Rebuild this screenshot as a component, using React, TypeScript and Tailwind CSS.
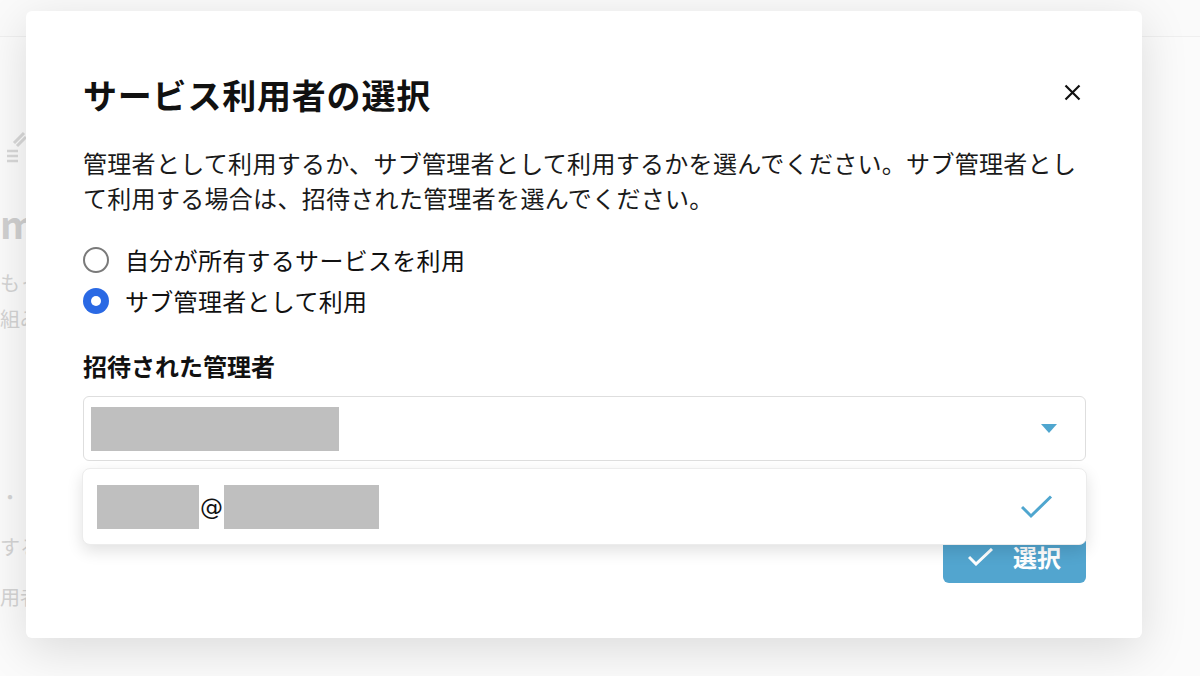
import React from 'react';

const Redacted = ({ w }: { w: number }) => (
    <span className="inline-block h-[44px] bg-[#bfbfbf]" style={{ width: w }} />
);

export default function App() {
    return (
        <div className="relative h-[676px] w-[1200px] overflow-hidden bg-[#fbfbfb] font-['Noto_Sans_CJK_JP','Noto_Sans',sans-serif] text-[#111]">
            {/* Page behind the dialog */}
            <div className="h-[37px] border-b border-[#efefef] bg-[#fafafa]" />
            <div className="flex flex-col items-start whitespace-nowrap text-[#d4d4d4]">
                <svg width="26" height="40" viewBox="0 0 26 40" className="mt-[92px] shrink-0">
                    <path d="M14 14 L24 4 M17 17 L26 8" stroke="#d8d8d8" strokeWidth="3" />
                    <path d="M7 22 h11 M7 27 h11 M7 32 h11" stroke="#d8d8d8" strokeWidth="2.5" />
                </svg>
                <div className="mt-[34px] text-[38px] font-bold leading-[40px] text-[#d0d0d0]">ma</div>
                <div className="mt-[22px] text-[20px] leading-[36px]">もっと簡単に</div>
                <div className="text-[20px] leading-[36px]">組み合わせ</div>
                <div className="mt-[150px] text-[20px] leading-[20px]">・</div>
                <div className="mt-[22px] text-[20px] leading-[36px]">するよ</div>
                <div className="mt-[14px] text-[20px] leading-[36px]">用者</div>
            </div>

            {/* Dialog */}
            <div className="absolute left-[26px] top-[11px] flex w-[1116px] flex-col rounded-[6px] bg-white pb-[55px] pl-[57px] pr-[56px] pt-[60px] shadow-[0_12px_48px_rgba(0,0,0,0.13)]">
                <div className="flex items-center justify-between">
                    <h2 className="text-[34px] font-bold leading-[48px] tracking-[0.8px]">サービス利用者の選択</h2>
                    <button className="mr-[5px] -mt-[6px]" aria-label="閉じる">
                        <svg width="17" height="17" viewBox="0 0 17 17">
                            <path d="M1.5 1.5 L15.5 15.5 M15.5 1.5 L1.5 15.5" stroke="#111" strokeWidth="2.2" />
                        </svg>
                    </button>
                </div>

                <p className="mt-[26px] text-[24px] leading-[35px] tracking-[0.3px] text-[#1a1a1a]">
                    管理者として利用するか、サブ管理者として利用するかを選んでください。サブ管理者とし
                    <br />
                    て利用する場合は、招待された管理者を選んでください。
                </p>

                <div className="mt-[24px] flex flex-col">
                    <label className="flex h-[41px] items-center gap-[16px]">
                        <span className="h-[26px] w-[26px] rounded-full border-2 border-[#7a7a7a]" />
                        <span className="text-[24px] tracking-[0.3px]">自分が所有するサービスを利用</span>
                    </label>
                    <label className="flex h-[41px] items-center gap-[16px]">
                        <span className="flex h-[26px] w-[26px] items-center justify-center rounded-full bg-[#2a69e4]">
                            <span className="h-[10px] w-[10px] rounded-full bg-white" />
                        </span>
                        <span className="text-[24px] tracking-[0.3px]">サブ管理者として利用</span>
                    </label>
                </div>

                <div className="mt-[28px] text-[24px] font-bold leading-[34px]">招待された管理者</div>

                <div className="relative mt-[13px]">
                    <div className="flex h-[65px] items-center justify-between rounded-[6px] border border-[#dedede] pl-[7px] pr-[28px]">
                        <Redacted w={248} />
                        <svg width="16" height="9" viewBox="0 0 16 9">
                            <path d="M0 0 H16 L8 9 Z" fill="#4fa6cf" />
                        </svg>
                    </div>

                    {/* Open listbox */}
                    <div className="absolute left-[-1px] right-[-1px] top-[72px] z-10 flex h-[77px] items-center justify-between rounded-[8px] border border-[#ececec] bg-white pl-[14px] pr-[33px] shadow-[0_6px_16px_rgba(0,0,0,0.12)]">
                        <div className="flex items-center">
                            <Redacted w={102} />
                            <span className="px-[1px] text-[23px] leading-[44px] text-[#111] font-['DejaVu_Sans',sans-serif]">@</span>
                            <Redacted w={155} />
                        </div>
                        <svg width="32" height="24" viewBox="0 0 32 24">
                            <path d="M1 12 L10 21 L30 1.5" fill="none" stroke="#4fa6cf" strokeWidth="3" />
                        </svg>
                    </div>
                </div>

                <button className="mt-[69px] flex h-[53px] w-[143px] items-center justify-center gap-[20px] self-end rounded-[6px] bg-[#52a5cf] text-[24px] font-bold text-white">
                    <svg width="25" height="18" viewBox="0 0 25 18">
                        <path d="M1 9 L8 16 L24 1" fill="none" stroke="#fff" strokeWidth="3" />
                    </svg>
                    選択
                </button>
            </div>
        </div>
    );
}
